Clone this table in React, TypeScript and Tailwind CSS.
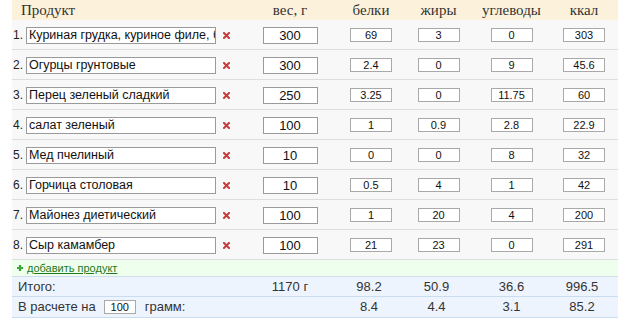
import React from "react";

type Item = {
  name: string;
  weight: string;
  p: string;
  f: string;
  c: string;
  kcal: string;
};

const items: Item[] = [
  { name: "Куриная грудка, куриное филе, без кожи", weight: "300", p: "69", f: "3", c: "0", kcal: "303" },
  { name: "Огурцы грунтовые", weight: "300", p: "2.4", f: "0", c: "9", kcal: "45.6" },
  { name: "Перец зеленый сладкий", weight: "250", p: "3.25", f: "0", c: "11.75", kcal: "60" },
  { name: "салат зеленый", weight: "100", p: "1", f: "0.9", c: "2.8", kcal: "22.9" },
  { name: "Мед пчелиный", weight: "10", p: "0", f: "0", c: "8", kcal: "32" },
  { name: "Горчица столовая", weight: "10", p: "0.5", f: "4", c: "1", kcal: "42" },
  { name: "Майонез диетический", weight: "100", p: "1", f: "20", c: "4", kcal: "200" },
  { name: "Сыр камамбер", weight: "100", p: "21", f: "23", c: "0", kcal: "291" },
];

function RemoveIcon() {
  return (
    <svg width="7" height="7" viewBox="0 0 7 7" className="shrink-0">
      <path d="M1 1 L6 6 M6 1 L1 6" stroke="#c43c3c" strokeWidth="2" strokeLinecap="square" />
    </svg>
  );
}

function SmallInput({ value }: { value: string }) {
  return (
    <input
      readOnly
      defaultValue={value}
      className="h-[14px] w-[42px] border border-[#a9a9a9] bg-white text-center text-[11px] leading-none text-[#111] outline-none"
    />
  );
}

export default function App() {
  return (
    <div className="w-[633px] h-[323px] bg-white font-['Liberation_Sans',Arial,sans-serif]">
      <div className="ml-[12px] w-[606px] text-[#222]">
        {/* header */}
        <div className="flex h-[20px] items-center bg-[#fcf2dc] font-['Liberation_Serif','Times_New_Roman',serif] text-[15px] text-[#333]">
          <div className="w-[240px] pl-[9px]">Продукт</div>
          <div className="w-[76px] text-center">вес, г</div>
          <div className="w-[86px] text-center">белки</div>
          <div className="w-[49px] text-center">жиры</div>
          <div className="w-[97px] text-center">углеводы</div>
          <div className="w-[48px] text-center">ккал</div>
        </div>

        {/* products */}
        {items.map((it, i) => (
          <div key={i} className="flex h-[30px] items-center border-b border-[#dedede] bg-[#f8f8f8] pt-[1px]">
            <div className="flex w-[240px] items-center">
              <span className="w-[14px] pl-[1px] text-[12px]">{i + 1}.</span>
              <input
                readOnly
                defaultValue={it.name}
                className="h-[17px] w-[190px] border border-[#9a9a9a] bg-white pl-[2px] text-[12.5px] leading-none text-[#111] outline-none"
              />
              <span className="ml-[7px]">
                <RemoveIcon />
              </span>
            </div>
            <div className="flex w-[76px] justify-center">
              <input
                readOnly
                defaultValue={it.weight}
                className="h-[17px] w-[55px] border border-[#9a9a9a] bg-white text-center text-[13px] leading-none text-[#111] outline-none"
              />
            </div>
            <div className="flex w-[86px] justify-center">
              <SmallInput value={it.p} />
            </div>
            <div className="flex w-[49px] justify-center">
              <SmallInput value={it.f} />
            </div>
            <div className="flex w-[97px] justify-center">
              <SmallInput value={it.c} />
            </div>
            <div className="flex w-[48px] justify-center">
              <SmallInput value={it.kcal} />
            </div>
          </div>
        ))}

        {/* add product */}
        <div className="flex h-[17px] items-center gap-[4px] border-b border-[#cfdcec] bg-[#efffee] pl-[5px]">
          <svg width="6" height="6" viewBox="0 0 6 6">
            <path d="M3 0 V6 M0 3 H6" stroke="#3aa53a" strokeWidth="2.2" />
          </svg>
          <a className="text-[11px] text-[#1f7a1f] underline">добавить продукт</a>
        </div>

        {/* totals */}
        <div className="flex h-[20px] items-center border-b border-[#cadcf0] bg-[#eef4fd] text-[13px] text-[#333]">
          <div className="w-[240px] pl-[6px]">Итого:</div>
          <div className="w-[76px] text-center">1170 г</div>
          <div className="w-[82px] text-center">98.2</div>
          <div className="w-[53px] text-center">50.9</div>
          <div className="w-[97px] text-center">36.6</div>
          <div className="w-[44px] text-center">996.5</div>
        </div>

        <div className="flex h-[21px] items-center border-b border-[#cadcf0] bg-[#eef4fd] text-[13px] text-[#333]">
          <div className="flex w-[316px] items-center pl-[6px]">
            <span>В расчете на</span>
            <input
              readOnly
              defaultValue="100"
              className="ml-[8px] h-[14px] w-[32px] border border-[#a9a9a9] bg-white text-center text-[11px] leading-none text-[#111] outline-none"
            />
            <span className="ml-[9px]">грамм:</span>
          </div>
          <div className="w-[82px] text-center">8.4</div>
          <div className="w-[53px] text-center">4.4</div>
          <div className="w-[97px] text-center">3.1</div>
          <div className="w-[44px] text-center">85.2</div>
        </div>
      </div>
    </div>
  );
}
